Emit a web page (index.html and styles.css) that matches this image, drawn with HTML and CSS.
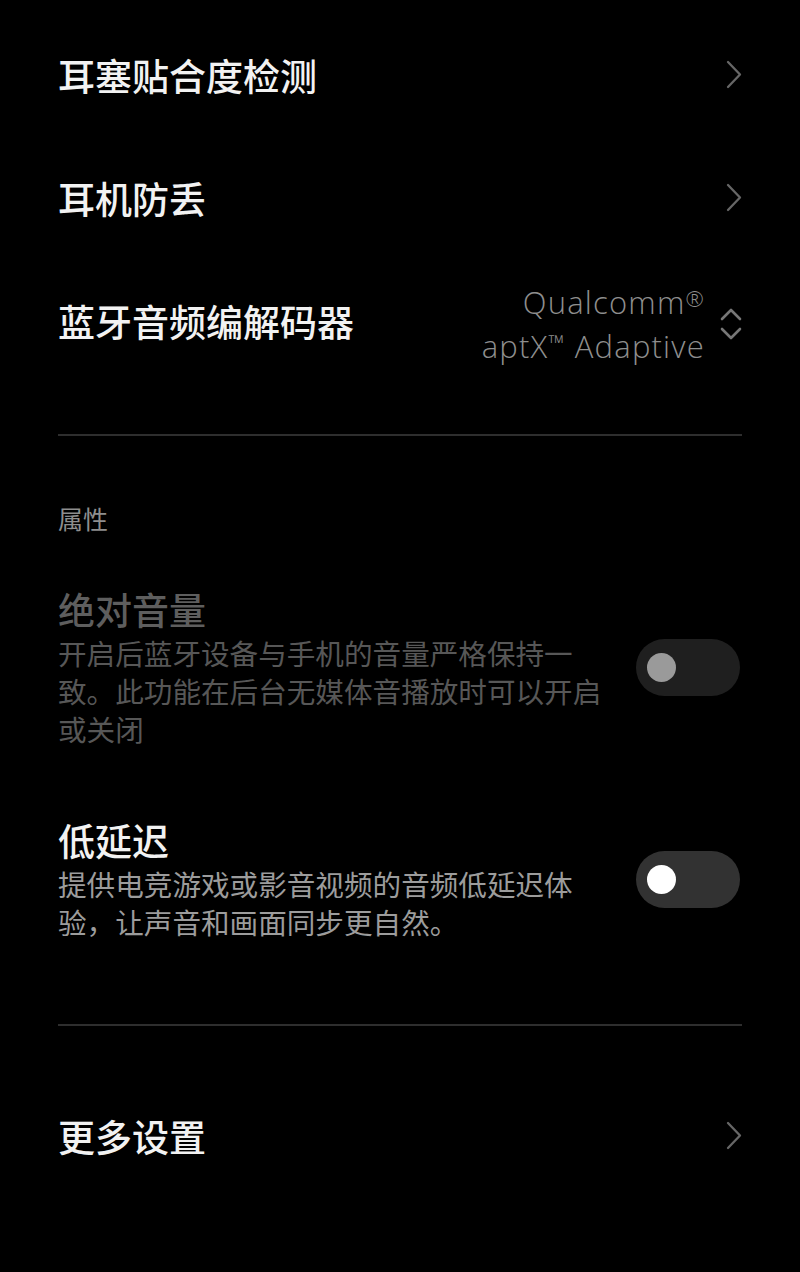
FILE: index.html
```html
<!DOCTYPE html>
<html lang="zh-CN">
<head>
    <meta charset="UTF-8">
    <meta name="viewport" content="width=device-width, initial-scale=1.0">
    <title>耳机设置</title>
    <link rel="stylesheet" href="styles.css">
</head>
<body>
    <div class="page">
        <div class="row">
            <span class="row-title">耳塞贴合度检测</span>
            <svg class="chevron" viewBox="0 0 16 29"><path d="M2 2 L14 14.5 L2 27"/></svg>
        </div>
        <div class="row">
            <span class="row-title">耳机防丢</span>
            <svg class="chevron" viewBox="0 0 16 29"><path d="M2 2 L14 14.5 L2 27"/></svg>
        </div>
        <div class="row">
            <span class="row-title">蓝牙音频编解码器</span>
            <div class="codec">
                <div class="codec-value">Qualcomm<sup>®</sup><br>aptX<sup>™</sup> Adaptive</div>
                <svg class="updown" viewBox="0 0 22 32"><path d="M2 11 L11 2 L20 11"/><path d="M2 21 L11 30 L20 21"/></svg>
            </div>
        </div>

        <div class="divider first"></div>

        <div class="section-label">属性</div>

        <div class="switch-item disabled">
            <div class="switch-text">
                <div class="switch-title">绝对音量</div>
                <div class="switch-desc">开启后蓝牙设备与手机的音量严格保持一致。此功能在后台无媒体音播放时可以开启或关闭</div>
            </div>
            <div class="toggle"><span class="knob"></span></div>
        </div>

        <div class="switch-item second">
            <div class="switch-text">
                <div class="switch-title">低延迟</div>
                <div class="switch-desc">提供电竞游戏或影音视频的音频低延迟体验，让声音和画面同步更自然。</div>
            </div>
            <div class="toggle"><span class="knob"></span></div>
        </div>

        <div class="divider last"></div>

        <div class="row more">
            <span class="row-title">更多设置</span>
            <svg class="chevron" viewBox="0 0 16 29"><path d="M2 2 L14 14.5 L2 27"/></svg>
        </div>
    </div>
</body>
</html>
```

FILE: styles.css
```css
body {
    margin: 0;
    padding: 0;
    background: #000;
    color: #f2f2f2;
    font-family: "Noto Sans CJK SC", "Noto Sans", sans-serif;
}

.page {
    width: 800px;
    height: 1272px;
    box-sizing: border-box;
    padding: 13px 58px 0;
}

.row {
    height: 123px;
    display: flex;
    align-items: center;
    justify-content: space-between;
}

.row-title {
    font-size: 37px;
    font-weight: 500;
    line-height: 46px;
}

.chevron {
    width: 16px;
    height: 29px;
    fill: none;
    stroke: #666;
    stroke-width: 2.3;
    stroke-linecap: round;
    stroke-linejoin: round;
}

.codec {
    display: flex;
    align-items: center;
    gap: 15px;
    margin-top: 6px;
}

.codec-value {
    font-family: "Open Sans", Roboto, sans-serif;
    font-weight: 300;
    font-size: 31px;
    letter-spacing: 1.2px;
    line-height: 44px;
    color: #8e8e8e;
    text-align: right;
}

.codec-value sup {
    font-size: 22px;
    line-height: 0;
    vertical-align: 7px;
}

.updown {
    width: 22px;
    height: 32px;
    fill: none;
    stroke: #777;
    stroke-width: 2.6;
    stroke-linecap: round;
    stroke-linejoin: round;
}

.divider {
    height: 2px;
    background: #2e2e2e;
}

.divider.first {
    margin-top: 52px;
}

.divider.last {
    margin-top: 83px;
}

.section-label {
    margin-top: 65px;
    font-size: 25px;
    line-height: 34px;
    color: #8e8e8e;
}

.switch-item {
    display: flex;
    align-items: center;
    justify-content: space-between;
    margin-top: 51px;
}

.switch-item.second {
    margin-top: 69px;
}

.switch-text {
    width: 560px;
}

.switch-title {
    font-size: 37px;
    font-weight: 500;
    line-height: 46px;
}

.switch-desc {
    margin-top: 2px;
    font-size: 28.6px;
    line-height: 38px;
    color: #9c9c9c;
}

.disabled .switch-title {
    color: #5e5e5e;
}

.disabled .switch-desc {
    color: #575757;
}

.toggle {
    width: 104px;
    height: 57px;
    box-sizing: border-box;
    padding-left: 11px;
    border-radius: 29px;
    background: #323232;
    display: flex;
    align-items: center;
    margin-right: 2px;
}

.knob {
    width: 29px;
    height: 29px;
    border-radius: 50%;
    background: #fff;
}

.disabled .toggle {
    background: #1f1f1f;
}

.disabled .knob {
    background: #9a9a9a;
}

.more {
    margin-top: 48px;
}
```
